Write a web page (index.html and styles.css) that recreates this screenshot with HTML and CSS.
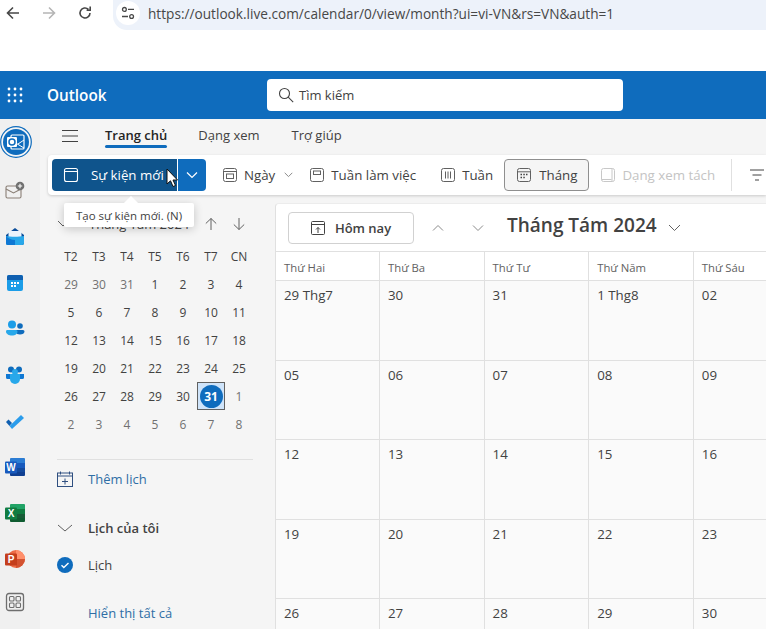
FILE: index.html
```html
<!DOCTYPE html>
<html lang="vi">
<head>
<meta charset="utf-8">
<title>Outlook</title>
<link rel="stylesheet" href="styles.css">
</head>
<body>
<div class="browser">
  <svg class="b-ic" width="16" height="16" viewBox="0 0 16 16"><path d="M14 8H2.500M8 2.500 2.500 8 8 13.500" fill="none" stroke="#474747" stroke-width="1.600"/></svg>
  <svg class="b-ic" width="16" height="16" viewBox="0 0 16 16"><path d="M2 8h11.500M8 2.500 13.500 8 8 13.500" fill="none" stroke="#b5b5b5" stroke-width="1.600"/></svg>
  <svg class="b-ic" width="16" height="16" viewBox="0 0 16 16"><path d="M13 8a5 5 0 1 1-1.600-3.700M13.200 1.600v3.600H9.600" fill="none" stroke="#474747" stroke-width="1.600"/></svg>
  <div class="url">
    <span class="tune"><svg width="14" height="14" viewBox="0 0 14 14"><g fill="none" stroke="#474747" stroke-width="1.300"><circle cx="3.400" cy="3.400" r="1.900"/><path d="M7 3.400h6M1 10.500h6"/><circle cx="10.600" cy="10.500" r="1.900"/></g></svg></span>
    <span class="url-text">https://outlook.live.com/calendar/0/view/month?ui=vi-VN&amp;rs=VN&amp;auth=1</span>
  </div>
</div>

<header class="suite">
  <svg class="waffle" width="16" height="16" viewBox="0 0 16 16" fill="#fff"><circle cx="2" cy="2" r="1.400"/><circle cx="8" cy="2" r="1.400"/><circle cx="14" cy="2" r="1.400"/><circle cx="2" cy="8" r="1.400"/><circle cx="8" cy="8" r="1.400"/><circle cx="14" cy="8" r="1.400"/><circle cx="2" cy="14" r="1.400"/><circle cx="8" cy="14" r="1.400"/><circle cx="14" cy="14" r="1.400"/></svg>
  <span class="brand">Outlook</span>
  <div class="search">
    <svg width="16" height="16" viewBox="0 0 16 16"><circle cx="6.500" cy="6.500" r="5" fill="none" stroke="#424242" stroke-width="1.100"/><path d="m10.200 10.200 5 5" stroke="#424242" stroke-width="1.100"/></svg>
    <span>Tìm kiếm</span>
  </div>
</header>

<div class="app">
  <nav class="rail">
    <span class="rail-top"><svg width="32" height="32" viewBox="0 0 32 32"><circle cx="16" cy="16" r="15.300" fill="#f5f5f5" stroke="#0f6cbd" stroke-width="1.200"/><circle cx="16" cy="16" r="13" fill="#0f6cbd"/><rect x="11" y="9" width="13" height="14" rx="1" fill="none" stroke="#fff" stroke-width="1.200"/><path d="m14 16 10 6M24 14l-6 4" stroke="#fff" stroke-width="1"/><rect x="7" y="11" width="10" height="10" rx="1" fill="#fff"/><circle cx="12" cy="16" r="3" fill="none" stroke="#0f6cbd" stroke-width="1.500"/></svg></span>
    <span class="rail-ic"><svg width="20" height="20" viewBox="0 0 20 20"><rect x="1" y="5" width="15" height="12" rx="1.500" fill="none" stroke="#8a7f76" stroke-width="1.100"/><path d="m1 8 7.500 4L16 8" fill="none" stroke="#8a7f76" stroke-width="1.100"/><circle cx="15" cy="5" r="4.300" fill="#707070"/><path d="M15 2.800v4.400M12.800 5h4.400" stroke="#fff" stroke-width="1.100"/></svg></span>
    <span class="rail-ic"><svg width="20" height="20" viewBox="0 0 20 20"><path d="M1 8 10 1l9 7v8a2 2 0 0 1-2 2H3a2 2 0 0 1-2-2z" fill="#0a4d9a"/><rect x="3.500" y="4" width="13" height="8" fill="#eaf4fc"/><path d="M1 9c4 1 13 1 18 0v7a2 2 0 0 1-2 2H3a2 2 0 0 1-2-2z" fill="#28a8ea"/><path d="M1 9c2 2 5 4 9 4v5H3a2 2 0 0 1-2-2z" fill="#0f78d4"/></svg></span>
    <span class="rail-ic"><svg width="18" height="18" viewBox="0 0 18 18"><rect x="1" y="1" width="16" height="16" rx="2" fill="#1b9de8"/><path d="M1 3a2 2 0 0 1 2-2h12a2 2 0 0 1 2 2v3H1z" fill="#0f5fb0"/><g fill="#fff"><rect x="5" y="8" width="2" height="2"/><rect x="8" y="8" width="2" height="2"/><rect x="11" y="8" width="2" height="2"/><rect x="5" y="11" width="2" height="2"/><rect x="8" y="11" width="2" height="2"/></g></svg></span>
    <span class="rail-ic"><svg width="20" height="20" viewBox="0 0 20 20"><circle cx="7" cy="5.500" r="4" fill="#1b9de8"/><circle cx="15" cy="7" r="2.800" fill="#0f6cbd"/><path d="M11 11h7a1.500 1.500 0 0 1 1.500 1.500c0 2-2 3-4.500 3s-3.500-1-4-2z" fill="#0f6cbd"/><path d="M2 11h9a1.500 1.500 0 0 1 1.500 1.500c0 2.500-2.500 4-5.500 4s-6-1.500-6-4A1.500 1.500 0 0 1 2 11z" fill="#28a8ea"/></svg></span>
    <span class="rail-ic"><svg width="20" height="20" viewBox="0 0 20 20"><circle cx="6" cy="4.500" r="3" fill="#0f6cbd"/><circle cx="14" cy="4.500" r="3" fill="#0f6cbd"/><path d="M1 9h6v5H2.500A1.500 1.500 0 0 1 1 12.500zM13 9h6v3.500a1.500 1.500 0 0 1-1.500 1.500H13z" fill="#0f78d4"/><path d="M5 9h10v5a5 5 0 0 1-10 0z" fill="#28a8ea"/><circle cx="10" cy="7" r="3" fill="#28a8ea"/></svg></span>
    <span class="rail-ic"><svg width="20" height="20" viewBox="0 0 20 20"><path d="M1 11l2.500-2.500L7 12l-2.500 3z" fill="#0f5fb0"/><path d="M4.500 15 16 4l3 3L7 18z" fill="#2b9ceb"/></svg></span>
    <span class="rail-ic"><svg width="20" height="20" viewBox="0 0 20 20"><path d="M6 1h13a1 1 0 0 1 1 1v4H5V2a1 1 0 0 1 1-1z" fill="#2b7cd3"/><rect x="5" y="6" width="15" height="5" fill="#185abd"/><rect x="5" y="11" width="15" height="4" fill="#134a9e"/><path d="M5 15h15v3a1 1 0 0 1-1 1H6a1 1 0 0 1-1-1z" fill="#103f91"/><rect y="4.500" width="12" height="12" rx="1" fill="#185abd"/><text class="app-letter" x="6" y="14">W</text></svg></span>
    <span class="rail-ic"><svg width="20" height="20" viewBox="0 0 20 20"><path d="M6 1h13a1 1 0 0 1 1 1v4H5V2a1 1 0 0 1 1-1z" fill="#21a366"/><rect x="5" y="6" width="15" height="5" fill="#107c41"/><rect x="5" y="11" width="15" height="4" fill="#185c37"/><path d="M5 15h15v3a1 1 0 0 1-1 1H6a1 1 0 0 1-1-1z" fill="#0f5c31"/><rect y="4.500" width="12" height="12" rx="1" fill="#107c41"/><text class="app-letter" x="6" y="14">X</text></svg></span>
    <span class="rail-ic"><svg width="20" height="20" viewBox="0 0 20 20"><circle cx="11" cy="10" r="9" fill="#ed6c47"/><path d="M11 1a9 9 0 0 1 9 9h-9z" fill="#ff8f6b"/><path d="M11 10h9a9 9 0 0 1-9 9z" fill="#d35230"/><rect y="4.500" width="12" height="12" rx="1" fill="#c43e1c"/><text class="app-letter" x="6" y="14">P</text></svg></span>
    <span class="rail-ic"><svg width="20" height="20" viewBox="0 0 20 20"><rect x="1.500" y="1.500" width="17" height="17" rx="2.500" fill="none" stroke="#6e6e6e" stroke-width="1.300"/><g fill="none" stroke="#6e6e6e" stroke-width="1.100"><rect x="4.500" y="4.500" width="4.500" height="4.500" rx="1"/><rect x="11" y="4.500" width="4.500" height="4.500" rx="1"/><rect x="4.500" y="11" width="4.500" height="4.500" rx="1"/><rect x="11" y="11" width="4.500" height="4.500" rx="1"/></g></svg></span>
  </nav>

  <div class="workspace">
    <div class="tabs">
      <svg class="burger" width="18" height="14" viewBox="0 0 18 14"><path d="M1 1.500h16M1 7h16M1 12.500h16" stroke="#424242" stroke-width="1.200"/></svg>
      <span class="tab tab-on">Trang chủ</span>
      <span class="tab tab-mid">Dạng xem</span>
      <span class="tab">Trợ giúp</span>
    </div>

    <div class="ribbon">
      <div class="split">
        <span class="split-main">
          <svg width="16" height="16" viewBox="0 0 16 16"><rect x="1.500" y="1.500" width="13" height="13" rx="2" fill="none" stroke="#fff" stroke-width="1.100"/><path d="M1.500 4.500h13" stroke="#fff" stroke-width="1.100"/></svg>
          Sự kiện mới
        </span>
        <span class="split-more"><svg width="12" height="8" viewBox="0 0 12 8"><path d="m1 1.500 5 5 5-5" fill="none" stroke="#fff" stroke-width="1.200"/></svg></span>
      </div>
      <span class="rb rb-day"><svg width="16" height="16" viewBox="0 0 16 16"><rect x="1.500" y="1.500" width="13" height="13" rx="2" class="ln"/><path d="M1.500 4.500h13" class="ln"/><rect x="4.500" y="7" width="7" height="4.500" class="ln"/></svg>Ngày<svg class="caret" width="9" height="6" viewBox="0 0 9 6"><path d="m.7.800 3.800 3.800L8.300.800" fill="none" stroke="#8a8a8a"/></svg></span>
      <span class="rb"><svg width="16" height="16" viewBox="0 0 16 16"><rect x="1.500" y="1.500" width="13" height="13" rx="2" class="ln"/><rect x="4.500" y="4" width="7" height="3.500" class="ln"/></svg>Tuần làm việc</span>
      <span class="rb rb-week"><svg width="16" height="16" viewBox="0 0 16 16"><rect x="1.500" y="1.500" width="13" height="13" rx="2" class="ln"/><path d="M5.500 4.500v7M8 4.500v7M10.500 4.500v7" class="ln"/></svg>Tuần</span>
      <span class="rb rb-on"><svg width="16" height="16" viewBox="0 0 16 16"><rect x="1.500" y="1.500" width="13" height="13" rx="2" class="ln"/><path d="M1.500 4.800h13" class="ln"/><path d="M4.500 7.500h1.500M7.300 7.500h1.500M10 7.500h1.500M4.500 10.500h1.500M7.300 10.500h1.500" stroke="#424242" stroke-width="1.300"/></svg>Tháng</span>
      <span class="rb rb-off"><svg width="16" height="16" viewBox="0 0 16 16"><rect x="1.500" y="1.500" width="13" height="13" rx="2" fill="none" stroke="#c8c8c8"/><path d="M12 1.500v13M1.500 12.500h10" stroke="#c8c8c8"/></svg>Dạng xem tách</span>
      <span class="rb-sep"></span>
      <svg class="filter" width="16" height="12" viewBox="0 0 16 12"><path d="M1 1h14M3.500 6h9M6 11h4" stroke="#424242"/></svg>
    </div>

    <div class="panes">
      <aside class="side">
        <div class="mini-head">
          <svg class="mini-caret" width="12" height="8" viewBox="0 0 12 8"><path d="m1 1 5 5 5-5" fill="none" stroke="#616161"/></svg>
          <span class="mini-title">Tháng Tám 2024</span>
          <svg class="mini-arrow" width="14" height="14" viewBox="0 0 14 14"><path d="M7 13V1.500M1.800 6.500 7 1.500l5.200 5" fill="none" stroke="#616161"/></svg>
          <svg class="mini-arrow" width="14" height="14" viewBox="0 0 14 14"><path d="M7 1v11.500M1.800 7.500 7 12.500l5.200-5" fill="none" stroke="#616161"/></svg>
        </div>
        <div class="mini-grid">
          <span class="wd">T2</span><span class="wd">T3</span><span class="wd">T4</span><span class="wd">T5</span><span class="wd">T6</span><span class="wd">T7</span><span class="wd">CN</span>
          <span class="out">29</span><span class="out">30</span><span class="out">31</span><span>1</span><span>2</span><span>3</span><span>4</span>
          <span>5</span><span>6</span><span>7</span><span>8</span><span>9</span><span>10</span><span>11</span>
          <span>12</span><span>13</span><span>14</span><span>15</span><span>16</span><span>17</span><span>18</span>
          <span>19</span><span>20</span><span>21</span><span>22</span><span>23</span><span>24</span><span>25</span>
          <span>26</span><span>27</span><span>28</span><span>29</span><span>30</span><span class="today"><b>31</b></span><span class="out">1</span>
          <span class="out">2</span><span class="out">3</span><span class="out">4</span><span class="out">5</span><span class="out">6</span><span class="out">7</span><span class="out">8</span>
        </div>
        <div class="add-cal">
          <svg width="16" height="16" viewBox="0 0 16 16"><g fill="none" stroke="#2f4f80" stroke-width="1"><rect x=".5" y="2" width="15" height="13.500"/><path d="M.5 5h15M3.500 .5v3M12.500 .5v3M8 7.500v6M5 10.500h6"/></g></svg>
          <span>Thêm lịch</span>
        </div>
        <div class="my-cal">
          <svg width="16" height="8" viewBox="0 0 16 8"><path d="m1 1 7 6 7-6" fill="none" stroke="#616161"/></svg>
          <span>Lịch của tôi</span>
        </div>
        <div class="cal-item">
          <svg width="16" height="16" viewBox="0 0 16 16"><circle cx="8" cy="8" r="8" fill="#0f6cbd"/><path d="m4.500 8.300 2.300 2.200 4.700-4.500" fill="none" stroke="#fff" stroke-width="1.400"/></svg>
          <span>Lịch</span>
        </div>
        <div class="show-all">Hiển thị tất cả</div>
      </aside>

      <main class="cal">
        <div class="cal-bar">
          <span class="today-btn"><svg width="14" height="14" viewBox="0 0 14 14"><g fill="none" stroke="#424242"><rect x=".5" y=".5" width="13" height="13" rx="1"/><path d="M.5 3.500h13M7 12V6.500M5 8.500l2-2 2 2"/></g></svg>Hôm nay</span>
          <svg class="nav-up" width="12" height="8" viewBox="0 0 12 8"><path d="m1 6.500 5-5 5 5" fill="none" stroke="#8a8a8a"/></svg>
          <svg class="nav-down" width="12" height="8" viewBox="0 0 12 8"><path d="m1 1.500 5 5 5-5" fill="none" stroke="#8a8a8a"/></svg>
          <span class="month">Tháng Tám 2024</span>
          <svg class="month-caret" width="13" height="8" viewBox="0 0 13 8"><path d="m1 1 5.500 5.500L12 1" fill="none" stroke="#616161"/></svg>
        </div>
        <div class="cal-grid">
          <div class="hd">Thứ Hai</div><div class="hd">Thứ Ba</div><div class="hd">Thứ Tư</div><div class="hd">Thứ Năm</div><div class="hd">Thứ Sáu</div>
          <div class="d">29 Thg7</div><div class="d">30</div><div class="d">31</div><div class="d">1 Thg8</div><div class="d">02</div>
          <div class="d">05</div><div class="d">06</div><div class="d">07</div><div class="d">08</div><div class="d">09</div>
          <div class="d">12</div><div class="d">13</div><div class="d">14</div><div class="d">15</div><div class="d">16</div>
          <div class="d">19</div><div class="d">20</div><div class="d">21</div><div class="d">22</div><div class="d">23</div>
          <div class="d">26</div><div class="d">27</div><div class="d">28</div><div class="d">29</div><div class="d">30</div>
        </div>
      </main>
    </div>
  </div>
</div>

<div class="tooltip">Tạo sự kiện mới. (N)</div>
<svg class="cursor" width="12" height="20" viewBox="0 0 12 20"><path d="M1 1v15l3.500-3.200L7 18.500l2.500-1L7 12h4.500z" fill="#fff" stroke="#111" stroke-width="1"/></svg>
</body>
</html>
```
FILE: styles.css
```css
* { box-sizing: border-box; }
html, body { margin: 0; height: 100%; overflow: hidden; }
body { width: 766px; height: 629px; position: relative; background: #fff; color: #424242; font-family: "Open Sans", "Noto Sans", sans-serif; font-size: 13px; }
span, div { white-space: nowrap; }
.ln { fill: none; stroke: #616161; stroke-width: 1; }

.browser { height: 30px; display: flex; align-items: center; padding-left: 5px; gap: 20px; position: relative; }
.b-ic { flex: none; margin-top: -4px; }
.url { flex: 1; height: 30px; background: #edf2fa; border-radius: 0 0 0 14px; display: flex; align-items: center; padding-left: 3px; gap: 8px; }
.tune { width: 24px; height: 24px; border-radius: 50%; background: #fff; display: flex; align-items: center; justify-content: center; margin-top: -4px; }
.url-text { font-size: 13.650px; color: #474747; margin-top: -4px; }

.suite { margin-top: 41px; height: 48px; background: #0f6cbd; display: flex; align-items: center; padding-left: 7px; color: #fff; }
.waffle { flex: none; }
.brand { margin-left: 24px; font-size: 15.300px; font-weight: 600; width: 220px; }
.search { width: 356px; height: 32px; background: #fff; border-radius: 4px; display: flex; align-items: center; gap: 5px; padding-left: 11px; color: #424242; font-size: 13px; }

.app { display: flex; height: 510px; overflow: hidden; }
.rail { width: 40px; flex: none; background: #f0f0f0; display: flex; flex-direction: column; align-items: center; }
.rail-top { height: 46px; margin-top: 7px; width: 100%; display: flex; justify-content: center; margin-left: -9px; }
.rail-ic { height: 46px; display: flex; align-items: center; justify-content: center; margin-left: -10px; width: 30px; flex: none; }
.rail-top + .rail-ic { margin-top: -4px; }
.rail-ic:last-child { margin-top: -3px; }
.app-letter { font: 700 10px "Liberation Sans", sans-serif; fill: #fff; text-anchor: middle; }

.workspace { flex: 1; min-width: 0; background: #f5f5f5; display: flex; flex-direction: column; }
.tabs { height: 36px; display: flex; align-items: center; padding: 0 0 5px 21px; flex: none; }
.burger { margin-right: 26px; margin-top: 2px; flex: none; }
.tab { font-size: 13px; margin-right: 31px; position: relative; color: #424242; }
.tab-mid { margin-right: 32px; }
.tab-on { font-weight: 600; color: #242424; }
.tab-on::after { content: ""; position: absolute; left: 0; right: 0; bottom: -4px; height: 3px; border-radius: 2px; background: #0f6cbd; }

.ribbon { margin-left: 8px; height: 40px; background: #fff; border-radius: 4px 0 0 4px; box-shadow: 0 1px 3px rgba(0,0,0,.18); display: flex; align-items: center; padding-left: 4px; flex: none; overflow: hidden; }
.split { display: flex; height: 32px; border-radius: 4px; overflow: hidden; color: #fff; margin-right: 8px; flex: none; }
.split-main { width: 125px; background: #0f548c; display: flex; align-items: center; gap: 12px; padding-left: 11px; font-size: 13.300px; }
.split-more { width: 28px; margin-left: 1px; background: #0f6cbd; display: flex; align-items: center; justify-content: center; }
.rb { display: flex; align-items: center; gap: 6px; height: 32px; padding: 0 8px; font-size: 13.300px; color: #424242; flex: none; }
.caret { margin-left: 3px; }
.rb-week { margin-left: 8px; }
.rb-on { border: 1px solid #8f8f8f; border-radius: 4px; background: #f5f5f5; padding: 0 11px; margin-left: 3px; gap: 7px; }
.rb-off { color: #c4c4c4; margin-left: 3px; }
.rb-sep { width: 1px; height: 32px; background: #e0e0e0; margin-left: 8px; flex: none; }
.filter { margin-left: 17px; flex: none; }

.panes { display: flex; flex: 1; min-height: 0; margin-top: 8px; }
.side { width: 235px; flex: none; padding-left: 17px; }
.mini-head { height: 39px; display: flex; align-items: center; padding-top: 3px; }
.mini-caret { margin-right: 20px; flex: none; }
.mini-title { width: 105px; font-size: 13px; margin-right: 10px; }
.mini-arrow { margin-right: 14px; flex: none; }
.mini-grid { display: grid; grid-template-columns: repeat(7, 28px); grid-auto-rows: 28px; font-size: 12px; color: #424242; text-align: center; }
.mini-grid span { display: flex; align-items: center; justify-content: center; }
.mini-grid .out { color: #717171; }
.today { background: #cfe4fa; border: 1px solid #616161; }
.today b { width: 23px; height: 23px; border-radius: 50%; background: #0f6cbd; color: #fff; font-weight: 700; display: flex; align-items: center; justify-content: center; }
.add-cal { border-top: 1px solid #e0e0e0; margin-top: 21px; width: 196px; height: 37px; display: flex; align-items: center; gap: 15px; padding-top: 2px; color: #2f6ea5; font-size: 13px; }
.my-cal { margin-top: 19px; height: 26px; display: flex; align-items: center; gap: 15px; font-weight: 600; font-size: 13px; }
.cal-item { margin-top: 11px; height: 26px; display: flex; align-items: center; gap: 15px; font-size: 13px; }
.show-all { margin-top: 26px; padding-left: 31px; color: #2f6ea5; font-size: 13px; }

.cal { flex: 1; min-width: 0; background: #fff; border-radius: 4px 0 0 0; border-top: 1px solid #ececec; border-left: 1px solid #e0e0e0; overflow: hidden; }
.cal-bar { height: 47px; display: flex; align-items: center; padding-left: 12px; }
.today-btn { width: 126px; height: 32px; border: 1px solid #d1d1d1; border-radius: 4px; display: flex; align-items: center; justify-content: center; gap: 10px; font-size: 13px; font-weight: 600; margin-right: 18px; }
.nav-up { margin-right: 28px; flex: none; }
.nav-down { margin-right: 23px; flex: none; }
.month { font-size: 19px; font-weight: 600; line-height: 1; margin-top: -4px; margin-right: 11px; }
.cal-grid { display: grid; grid-template-columns: 104px repeat(4, 104.600px); grid-template-rows: 29px repeat(5, 79.600px); border-top: 1px solid #e0e0e0; }
.hd { background: #fff; font-size: 11.300px; padding: 8px 0 0 8px; border-right: 1px solid #e0e0e0; border-bottom: 1px solid #e0e0e0; color: #616161; }
.d { background: #fafafa; font-size: 13.300px; padding: 5px 0 0 8px; border-right: 1px solid #e0e0e0; border-bottom: 1px solid #e0e0e0; }

.tooltip { position: absolute; left: 64px; top: 203px; width: 130px; height: 24px; background: #fff; font-size: 11.500px; display: flex; align-items: center; justify-content: center; color: #424242; box-shadow: 0 2px 10px rgba(0,0,0,.2); border-radius: 2px; }
.tooltip::before { content: ""; position: absolute; left: 62px; top: -5px; width: 10px; height: 10px; background: #fff; transform: rotate(45deg); }
.cursor { position: absolute; left: 166px; top: 168px; }
```
